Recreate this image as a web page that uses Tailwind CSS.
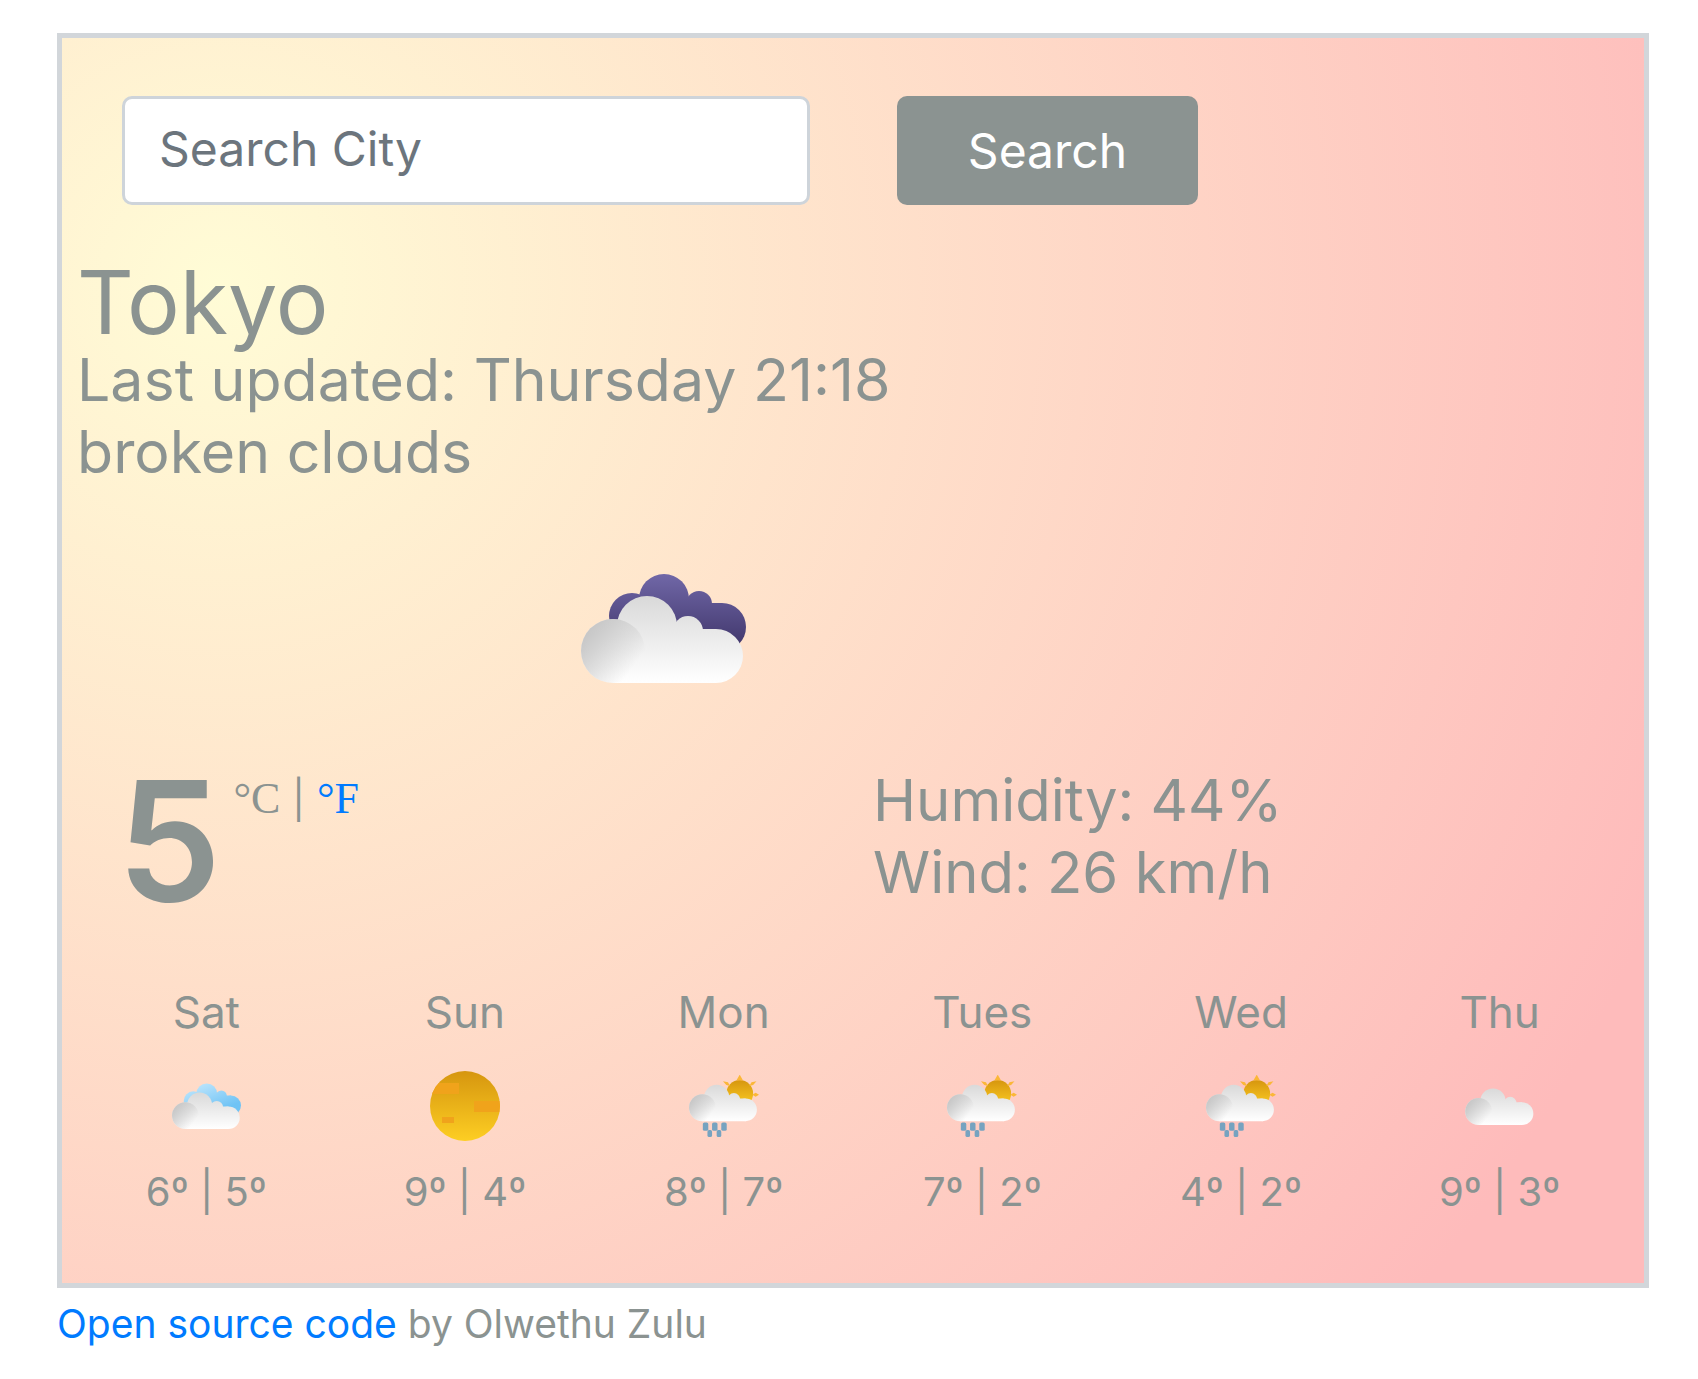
<!DOCTYPE html>
<html lang="en">
<head>
<meta charset="utf-8">
<meta name="viewport" content="width=device-width, initial-scale=1">
<title>Weather</title>
<script src="https://cdn.jsdelivr.net/npm/@tailwindcss/browser@4"></script>
</head>
<body class="bg-white font-['Inter',sans-serif] text-[#8b9391]">
<!-- shared shapes and gradients for the weather icons -->
<svg class="absolute size-0" aria-hidden="true">
  <defs>
    <linearGradient id="white" gradientUnits="userSpaceOnUse" x1="0" y1="23" x2="0" y2="110"><stop offset="0" stop-color="#d9d9d9"/><stop offset="1" stop-color="#ffffff"/></linearGradient>
    <linearGradient id="shade" x1="0.1" y1="0.15" x2="0.85" y2="0.7"><stop offset="0" stop-color="#c6c6c6"/><stop offset="1" stop-color="#c6c6c6" stop-opacity="0"/></linearGradient>
    <linearGradient id="night" gradientUnits="userSpaceOnUse" x1="0" y1="0" x2="0" y2="75"><stop offset="0" stop-color="#7168a8"/><stop offset="1" stop-color="#40366b"/></linearGradient>
    <linearGradient id="sky" gradientUnits="userSpaceOnUse" x1="60" y1="0" x2="90" y2="75"><stop offset="0" stop-color="#bfe6fc"/><stop offset="1" stop-color="#6fc3f5"/></linearGradient>
    <linearGradient id="gold" x1="0" y1="0" x2="0" y2="1"><stop offset="0" stop-color="#d6960f"/><stop offset="1" stop-color="#fdce23"/></linearGradient>
    <clipPath id="disc"><circle cx="35" cy="35" r="35"/></clipPath>
    <g id="back">
      <circle cx="51" cy="43" r="23"/><circle cx="83" cy="26" r="25"/><circle cx="118" cy="31" r="13"/><circle cx="141" cy="54" r="24"/><path d="M60 25h58l13 5h10v48H60z"/>
    </g>
    <g id="front">
      <g fill="url(#white)"><circle cx="32" cy="78" r="32"/><circle cx="66" cy="53" r="30"/><circle cx="107" cy="58" r="15"/><circle cx="135" cy="83" r="27"/><path d="M32 54h60l25 2h18v54H32z"/></g>
      <circle cx="32" cy="78" r="32" fill="url(#shade)"/>
    </g>
    <g id="showers">
      <circle cx="121" cy="44" r="32" fill="url(#gold)"/>
      <g fill="#fbb738"><path d="M113 13l8-14 8 14z"/><path d="M81 15l12 2 5 9-9-2zM161 15l-12 2-5 9 9-2zM167 47l-8-5-8 5 8 5z"/></g>
      <use href="#front"/>
      <g fill="#76a3c0"><rect x="33" y="113" width="13" height="20" rx="4"/><rect x="55" y="113" width="13" height="20" rx="4"/><rect x="77" y="113" width="13" height="20" rx="4"/><rect x="44" y="131" width="11" height="17" rx="4"/><rect x="66" y="131" width="11" height="17" rx="4"/></g>
    </g>
  </defs>
</svg>

<div class="ml-[57px] mr-[49px] pt-[33px]">
  <main class="border-[5px] border-[#d2d6da] bg-[radial-gradient(circle_at_10%_20%,rgb(255,252,214)_0%,rgb(254,187,187)_90%)] px-[15px] pt-[58px] pb-[67px]">
    <form class="ml-[45px] flex gap-[87px]" onsubmit="return false">
      <input type="text" aria-label="Search City" placeholder="Search City" class="h-[109px] w-[688px] rounded-[10px] border-[3px] border-[#ced4da] bg-white px-[34px] pb-1 text-[48px] placeholder:text-[#6c757d]">
      <button type="submit" class="h-[109px] w-[301px] rounded-[10px] bg-[#8b9391] text-[48px] text-white">Search</button>
    </form>

    <h1 class="mt-[55px] text-[88px] leading-[84px]">Tokyo</h1>
    <ul class="text-[59px] leading-[72px]">
      <li>Last updated: Thursday 21:18</li>
      <li>broken clouds</li>
    </ul>

    <div class="mt-[85px] flex w-3/4 justify-center pl-2">
      <svg class="h-[110px] w-[165px]" viewBox="0 0 165 110" role="img" aria-label="broken clouds"><use href="#back" fill="url(#night)"/><use href="#front"/></svg>
    </div>

    <div class="mt-[74px] grid grid-cols-[796px_1fr]">
      <div class="flex items-start pl-10">
        <strong class="text-[166px] leading-[168px] font-semibold">5</strong>
        <span class="ml-3 flex gap-3 pt-[18px] text-[44px] leading-[48px]">
          <span class="font-['Liberation_Serif',serif]">°C</span><span class="text-[38px]">|</span><a href="#" class="font-['Liberation_Serif',serif] text-[#007bff]">°F</a>
        </span>
      </div>
      <ul class="pt-[7px] text-[58px] leading-[72px]">
        <li>Humidity: 44%</li>
        <li>Wind: 26 km/h</li>
      </ul>
    </div>

    <section class="mt-[63px] grid grid-cols-6 text-center text-[44px] leading-[48px]">
      <div class="flex flex-col items-center"><h2>Sat</h2><div class="mt-[35px] mb-[27px] flex h-[70px] items-center"><svg class="h-[46px] w-[69px]" viewBox="0 0 165 110"><use href="#back" fill="url(#sky)"/><use href="#front"/></svg></div><p class="text-[40px]">6º | 5º</p></div>
      <div class="flex flex-col items-center"><h2>Sun</h2><div class="mt-[35px] mb-[27px] flex h-[70px] items-center"><svg class="size-[70px]" viewBox="0 0 70 70"><circle cx="35" cy="35" r="35" fill="url(#gold)"/><g clip-path="url(#disc)" fill="#f0a31b"><path d="M0 12h29v11H0zM44 30h26v11H44zM12 46h12v6H12z"/></g></svg></div><p class="text-[40px]">9º | 4º</p></div>
      <div class="flex flex-col items-center"><h2>Mon</h2><div class="mt-[35px] mb-[27px] flex h-[70px] items-center"><svg class="h-[63px] w-[70px]" viewBox="0 0 167 150"><use href="#showers"/></svg></div><p class="text-[40px]">8º | 7º</p></div>
      <div class="flex flex-col items-center"><h2>Tues</h2><div class="mt-[35px] mb-[27px] flex h-[70px] items-center"><svg class="h-[63px] w-[70px]" viewBox="0 0 167 150"><use href="#showers"/></svg></div><p class="text-[40px]">7º | 2º</p></div>
      <div class="flex flex-col items-center"><h2>Wed</h2><div class="mt-[35px] mb-[27px] flex h-[70px] items-center"><svg class="h-[63px] w-[70px]" viewBox="0 0 167 150"><use href="#showers"/></svg></div><p class="text-[40px]">4º | 2º</p></div>
      <div class="flex flex-col items-center"><h2>Thu</h2><div class="mt-[35px] mb-[27px] flex h-[70px] items-center"><svg class="h-[37px] w-[69px]" viewBox="0 22 163 88"><use href="#front"/></svg></div><p class="text-[40px]">9º | 3º</p></div>
    </section>
  </main>
  <footer class="mt-3 text-[39px] leading-[48px]"><a href="#" class="text-[#007bff]">Open source code</a> by Olwethu Zulu</footer>
</div>
</body>
</html>
